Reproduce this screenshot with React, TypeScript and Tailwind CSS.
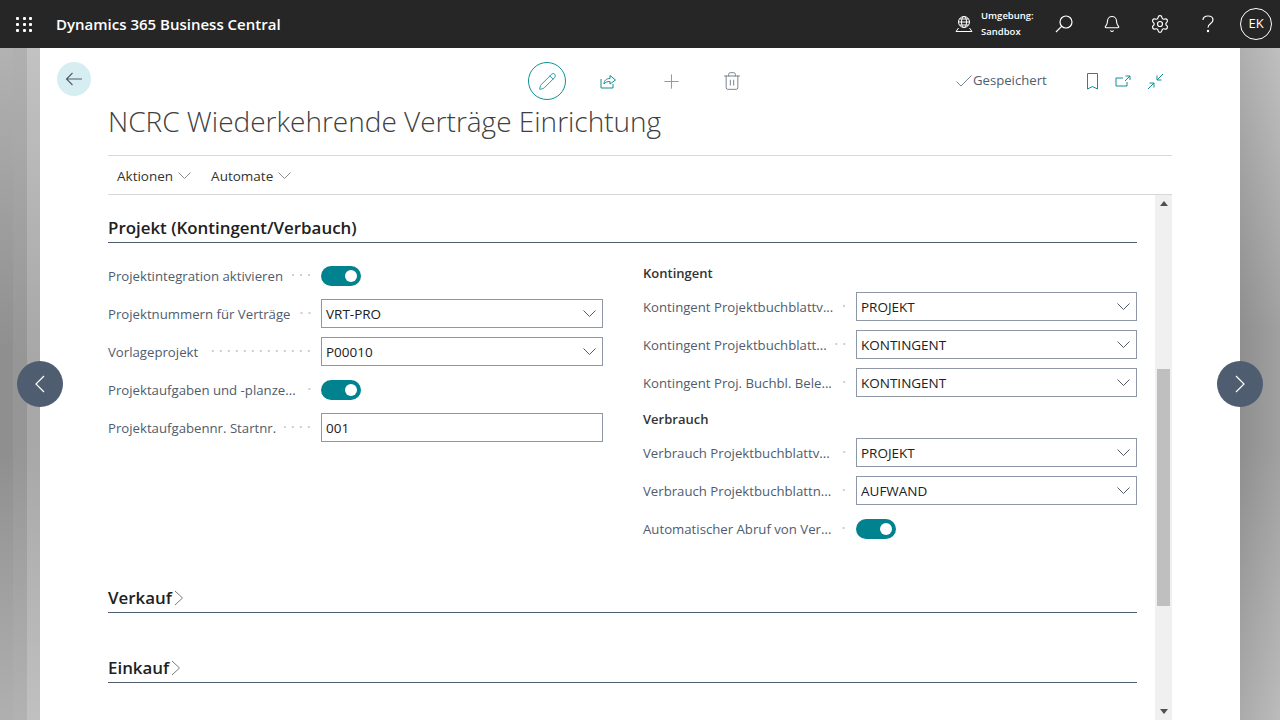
import { Bell, Pencil, Plus, Settings, Trash2 } from "lucide-react"

function Chevron({ className = "" }: { className?: string }) {
  return (
    <svg className={className} width="13" height="7" viewBox="0 0 13 7" fill="none" stroke="currentColor" strokeWidth="1">
      <path d="M0.5 0.5 L6.5 6.5 L12.5 0.5" />
    </svg>
  )
}

function Toggle() {
  return (
    <div className="flex h-[20px] w-[40px] items-center justify-end rounded-full bg-[#00838f] pr-[4px]">
      <div className="h-[12px] w-[12px] rounded-full bg-white" />
    </div>
  )
}

function Label({ text }: { text: string }) {
  return (
    <div className="flex w-[213px] shrink-0 items-center pr-[8px]">
      <span className="whitespace-nowrap pt-[3px] text-[13.2px] text-[#505c6d]">{text}</span>
      <span className="ml-[8px] h-[2px] flex-1 bg-[radial-gradient(circle,#cfcfcf_1px,transparent_1px)] bg-[length:8px_2px] bg-right bg-repeat-x" />
    </div>
  )
}

function Field({ label, value, select = false }: { label: string; value: string; select?: boolean }) {
  return (
    <div className="mb-[9px] flex h-[29px] items-center">
      <Label text={label} />
      <div className="flex h-[29px] flex-1 items-center justify-between border border-[#8d97a5] pl-[4px] pr-[6px]">
        <span className="pt-[1px] text-[13.5px] text-[#212121]">{value}</span>
        {select && <Chevron className="text-[#505c6d]" />}
      </div>
    </div>
  )
}

function SwitchRow({ label }: { label: string }) {
  return (
    <div className="mb-[9px] flex h-[29px] items-center">
      <Label text={label} />
      <Toggle />
    </div>
  )
}

function CollapsedSection({ title, className }: { title: string; className: string }) {
  return (
    <div className={`flex h-[29px] items-center gap-[2px] border-b border-[#4f5d70] ${className}`}>
      <span className="text-[16.9px] font-semibold text-[#212121]">{title}</span>
      <svg width="10" height="16" viewBox="0 0 10 16" fill="none" stroke="#7a7a7a" strokeWidth="1">
        <path d="M1 1 L8.5 8 L1 15" />
      </svg>
    </div>
  )
}

function NavArrow({ side }: { side: "left" | "right" }) {
  return (
    <div
      className={`absolute top-[361px] flex h-[46px] w-[46px] items-center justify-center rounded-full bg-[#4f5d70] ${
        side === "left" ? "left-[17px]" : "right-[17px]"
      }`}
    >
      <svg width="12" height="18" viewBox="0 0 12 18" fill="none" stroke="white" strokeWidth="1.2">
        <path d={side === "left" ? "M10 1 L2 9 L10 17" : "M2 1 L10 9 L2 17"} />
      </svg>
    </div>
  )
}

export default function App() {
  return (
    <div className="relative flex h-screen w-[1280px] flex-col overflow-hidden bg-white font-['Open_Sans',sans-serif]">
      {/* top bar */}
      <header className="flex h-12 shrink-0 items-center bg-[#262626] text-white">
        <div className="ml-[16px] grid grid-cols-3 gap-x-[3.5px] gap-y-[3px]">
          {Array.from({ length: 9 }).map((_, i) => (
            <span key={i} className="h-[3px] w-[3px] rounded-[1px] bg-white" />
          ))}
        </div>
        <span className="ml-[24px] text-[15px] font-semibold">Dynamics 365 Business Central</span>
        <svg className="ml-auto" width="18" height="18" viewBox="0 0 18 18" fill="none" stroke="white" strokeWidth="1">
          <circle cx="9" cy="7" r="5.5" />
          <ellipse cx="9" cy="7" rx="2.5" ry="5.5" />
          <path d="M3.5 7 H14.5 M4.5 4 H13.5 M4.5 10 H13.5 M3.5 13 L1 16.5 H17 L14.5 13" />
        </svg>
        <div className="ml-[8px] flex w-[59px] flex-col text-[9.5px] font-semibold leading-[16px]">
          <span>Umgebung:</span>
          <span>Sandbox</span>
        </div>
        <div className="flex h-12 w-[48px] items-center justify-center">
          <svg width="18" height="18" viewBox="0 0 18 18" fill="none" stroke="white" strokeWidth="1.2">
            <circle cx="11" cy="7" r="6" />
            <path d="M6.8 11.2 L1 17" />
          </svg>
        </div>
        <div className="flex h-12 w-[48px] items-center justify-center">
          <Bell size={18} strokeWidth={1.5} />
        </div>
        <div className="flex h-12 w-[48px] items-center justify-center">
          <Settings size={20} strokeWidth={1.4} />
        </div>
        <div className="flex h-12 w-[48px] items-center justify-center">
          <svg width="12" height="18" viewBox="0 0 12 18" fill="none" stroke="white" strokeWidth="1.2">
            <path d="M1 5 C1 2.5 3 1 6 1 C9 1 11 2.6 11 5 C11 8.5 6 8.5 6 12.5" />
            <circle cx="6" cy="16" r="0.6" fill="white" />
          </svg>
        </div>
        <div className="ml-[8px] mr-[8px] flex h-[32px] w-[32px] items-center justify-center rounded-full border border-white text-[13px]">
          EK
        </div>
      </header>

      {/* page background and card */}
      <div className="flex min-h-0 flex-1">
        <div className="flex w-[40px] shrink-0">
          <div className="w-[13px] bg-[linear-gradient(180deg,#b2b2b2,#8f8f8f_45%,#8f8f8f_60%,#b0b0b0)]" />
          <div className="w-[14px] bg-[linear-gradient(180deg,#b0b0b0,#969696_45%,#969696_60%,#b2b2b2)]" />
          <div className="w-[13px] bg-[linear-gradient(180deg,#c2c2c2,#a8a8a8_45%,#a8a8a8_60%,#c0c0c0)]" />
        </div>

        <main className="flex min-w-0 flex-1 flex-col bg-white">
          {/* toolbar */}
          <div className="flex h-[52px] shrink-0 items-start pl-[17px] pt-[14px]">
            <div className="flex h-[34px] w-[34px] items-center justify-center rounded-full bg-[#d6eef2]">
              <svg width="18" height="14" viewBox="0 0 18 14" fill="none" stroke="#505c6d" strokeWidth="1.1">
                <path d="M7.5 1 L1.5 7 L7.5 13 M1.5 7 H17" />
              </svg>
            </div>
            <div className="ml-[437px] flex h-[38px] w-[38px] items-center justify-center rounded-full border border-[#0e8f94] text-[#0e8f94]">
              <Pencil size={19} strokeWidth={1.1} />
            </div>
            <div className="ml-[30px] flex h-[38px] w-[24px] items-center justify-center">
              <svg width="16" height="15" viewBox="0 0 16 15" fill="none" stroke="#0e8f94" strokeWidth="1">
                <path d="M1 5 V14 H13 V10 M4 10 C4 6.5 6.5 4.5 10 4.5 V1.5 L15.5 6 L10 10 V7.5 C7.5 7.5 5.5 8 4 10 Z" />
              </svg>
            </div>
            <div className="ml-[39px] flex h-[38px] w-[24px] items-center justify-center text-[#9a9a9a]">
              <Plus size={23} strokeWidth={1.1} />
            </div>
            <div className="ml-[37px] flex h-[38px] w-[24px] items-center justify-center text-[#6f7986]">
              <Trash2 size={20} strokeWidth={1.1} />
            </div>
            <div className="ml-[212px] flex h-[38px] items-center text-[#505c6d]">
              <svg width="17" height="12" viewBox="0 0 17 12" fill="none" stroke="#7d8794" strokeWidth="1">
                <path d="M0.5 6.5 L5 11 L15.5 0.5" />
              </svg>
              <span className="text-[13.15px]">Gespeichert</span>
            </div>
            <div className="ml-[38px] flex h-[38px] w-[16px] items-center justify-center">
              <svg width="11" height="17" viewBox="0 0 11 17" fill="none" stroke="#0e8f94" strokeWidth="1">
                <path d="M0.5 0.5 H10.5 V16 L5.5 13.5 L0.5 16 Z" />
              </svg>
            </div>
            <div className="ml-[13px] flex h-[38px] w-[18px] items-center justify-center">
              <svg width="16" height="12" viewBox="0 0 16 12" fill="none" stroke="#0e8f94" strokeWidth="1">
                <path d="M8 3 H1 V11 H12 V7 M10.5 1 H15 V5 M15 1 L10 6" />
              </svg>
            </div>
            <div className="ml-[15px] flex h-[38px] w-[18px] items-center justify-center">
              <svg width="17" height="17" viewBox="0 0 17 17" fill="none" stroke="#0e8f94" strokeWidth="1">
                <path d="M16 1 L10 7 M10 2.5 V7 H14.5 M1 16 L7 10 M2.5 10 H7 V14.5" />
              </svg>
            </div>
          </div>

          {/* title */}
          <h1 className="ml-[68px] h-[55px] shrink-0 text-[28px] font-light leading-[42px] text-[#404040]">
            NCRC Wiederkehrende Verträge Einrichtung
          </h1>

          {/* action bar */}
          <div className="ml-[68px] flex h-[40px] w-[1064px] shrink-0 items-center border-y border-[#d8d8d8] pl-[9px] text-[13.5px] text-[#333333]">
            <span className="pt-[3px]">Aktionen</span>
            <Chevron className="ml-[5px] text-[#8a8a8a]" />
            <span className="ml-[20px] pt-[3px]">Automate</span>
            <Chevron className="ml-[5px] text-[#8a8a8a]" />
          </div>

          {/* scrolling content */}
          <div className="ml-[68px] flex min-h-0 w-[1064px] flex-1 gap-[18px]">
            <div className="w-[1029px] shrink-0 pt-[19px]">
              <div className="flex h-[29px] items-center border-b border-[#4f5d70]">
                <span className="text-[16.9px] font-semibold text-[#212121]">Projekt (Kontingent/Verbauch)</span>
              </div>
              <div className="flex gap-[40px] pt-[19px]">
                <div className="-mt-[1px] w-[495px]">
                  <SwitchRow label="Projektintegration aktivieren" />
                  <Field label="Projektnummern für Verträge" value="VRT-PRO" select />
                  <Field label="Vorlageprojekt" value="P00010" select />
                  <SwitchRow label="Projektaufgaben und -planze..." />
                  <Field label="Projektaufgabennr. Startnr." value="001" />
                </div>
                <div className="w-[494px]">
                  <div className="h-[30px] text-[13px] font-semibold leading-[22px] text-[#333333]">Kontingent</div>
                  <Field label="Kontingent Projektbuchblattv..." value="PROJEKT" select />
                  <Field label="Kontingent Projektbuchblatt..." value="KONTINGENT" select />
                  <Field label="Kontingent Proj. Buchbl. Bele..." value="KONTINGENT" select />
                  <div className="h-[32px] pt-[2px] text-[13px] font-semibold leading-[22px] text-[#333333]">Verbrauch</div>
                  <Field label="Verbrauch Projektbuchblattv..." value="PROJEKT" select />
                  <Field label="Verbrauch Projektbuchblattn..." value="AUFWAND" select />
                  <SwitchRow label="Automatischer Abruf von Ver..." />
                </div>
              </div>
              <CollapsedSection title="Verkauf" className="mt-[32px]" />
              <CollapsedSection title="Einkauf" className="mt-[41px]" />
            </div>

            {/* scrollbar */}
            <div className="flex w-[17px] shrink-0 flex-col items-center bg-[#f0f0f0]">
              <div className="flex h-[17px] w-full items-center justify-center">
                <svg width="8" height="5" viewBox="0 0 8 5" fill="#505050">
                  <path d="M4 0 L8 5 H0 Z" />
                </svg>
              </div>
              <div className="mt-[157px] h-[237px] w-[13px] bg-[#bfbfbf]" />
              <div className="mt-auto flex h-[17px] w-full items-center justify-center">
                <svg width="8" height="5" viewBox="0 0 8 5" fill="#505050">
                  <path d="M0 0 H8 L4 5 Z" />
                </svg>
              </div>
            </div>
          </div>
        </main>

        <div className="w-[40px] shrink-0 bg-[linear-gradient(90deg,rgba(0,0,0,0.05),rgba(255,255,255,0.1)),linear-gradient(180deg,#b8b8b8,#969696_42%,#969696_60%,#b4b4b4)]" />
      </div>

      <NavArrow side="left" />
      <NavArrow side="right" />
    </div>
  )
}
